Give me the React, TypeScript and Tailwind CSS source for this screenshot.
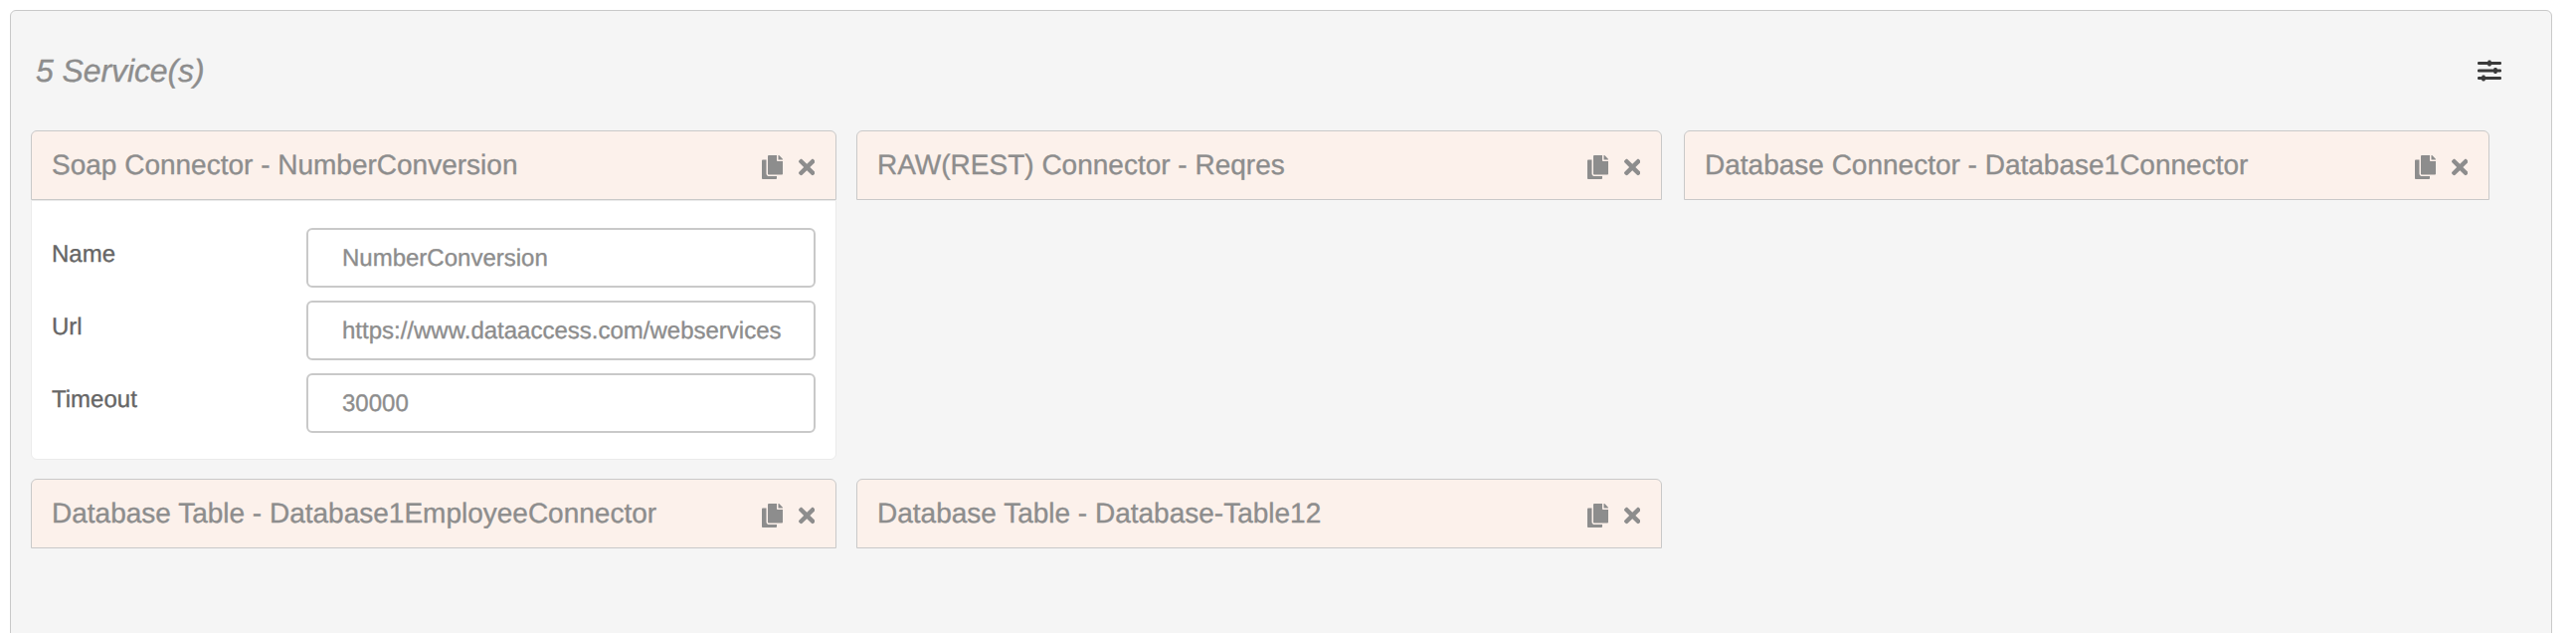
import type { ReactNode } from "react";
import { FaCopy, FaTimes } from "react-icons/fa";

type Field = { label: string; value: string };
type Service = { title: string; fields?: Field[] };

const services: Service[] = [
  {
    title: "Soap Connector - NumberConversion",
    fields: [
      { label: "Name", value: "NumberConversion" },
      { label: "Url", value: "https://www.dataaccess.com/webservices" },
      { label: "Timeout", value: "30000" },
    ],
  },
  { title: "RAW(REST) Connector - Reqres" },
  { title: "Database Connector - Database1Connector" },
  { title: "Database Table - Database1EmployeeConnector" },
  { title: "Database Table - Database-Table12" },
];

function SlidersIcon() {
  return (
    <svg width="24" height="22" viewBox="0 0 24 22" fill="#3a3a3a">
      <rect x="0" y="2" width="24" height="3" rx="1.2" />
      <rect x="0" y="9.5" width="24" height="3" rx="1.2" />
      <rect x="0" y="17" width="24" height="3" rx="1.2" />
      <rect x="10.3" y="0.4" width="3.4" height="6.2" rx="1.4" />
      <rect x="16.3" y="7.9" width="3.4" height="6.2" rx="1.4" />
      <rect x="4.3" y="15.4" width="3.4" height="6.2" rx="1.4" />
    </svg>
  );
}

function CardBody({ children }: { children: ReactNode }) {
  return (
    <div className="flex h-[261px] flex-col gap-[13px] rounded-b-md border border-[#ebebeb] bg-white pt-[27px] pr-5 pl-5">
      {children}
    </div>
  );
}

function ServiceCard({ service }: { service: Service }) {
  return (
    <section className="w-[810px]">
      <header className="flex h-[70px] items-start rounded-t-md border border-[#c9c9c9] bg-[#fcf1eb] pr-5 pl-5 text-[#8d8d8d]">
        <h2 className="mt-[17px] flex-1 text-[28px] leading-[34px] whitespace-nowrap">{service.title}</h2>
        <FaCopy className="mt-6 h-6 w-[21px]" />
        <FaTimes className="mt-6 mr-px ml-4 h-6 w-[16.5px]" />
      </header>
      {service.fields && (
        <CardBody>
          {service.fields.map((field) => (
            <div key={field.label} className="flex h-[60px] shrink-0">
              <label className="mt-[13px] w-64 shrink-0 text-2xl leading-7 text-[#666]">{field.label}</label>
              <div className="flex h-[60px] min-w-0 flex-1 items-center rounded-md border-2 border-[#c9c9c9] bg-white pt-0.5 pr-7 pl-[34px] text-2xl leading-7 text-[#8d8d8d]">
                <span className="whitespace-nowrap">{field.value}</span>
              </div>
            </div>
          ))}
        </CardBody>
      )}
    </section>
  );
}

export default function App() {
  return (
    <div className="h-[636px] overflow-hidden bg-white pt-2.5 pl-2.5 font-['Liberation_Sans',Arial,sans-serif] [-webkit-text-stroke-width:0.35px] [text-rendering:geometricPrecision]">
      <main className="h-[700px] w-[2556px] rounded-md border border-[#c9c9c9] bg-[#f5f5f5]">
        <div className="flex h-[120px] items-start justify-between pr-[50px] pl-[25px]">
          <h1 className="mt-[42px] text-[32px] leading-9 tracking-[-0.1px] text-[#8d8d8d] italic">5 Service(s)</h1>
          <div className="mt-[49px]">
            <SlidersIcon />
          </div>
        </div>
        <div className="ml-5 grid grid-cols-[830px_832px_810px] gap-y-[19px]">
          {services.map((service) => (
            <ServiceCard key={service.title} service={service} />
          ))}
        </div>
      </main>
    </div>
  );
}
